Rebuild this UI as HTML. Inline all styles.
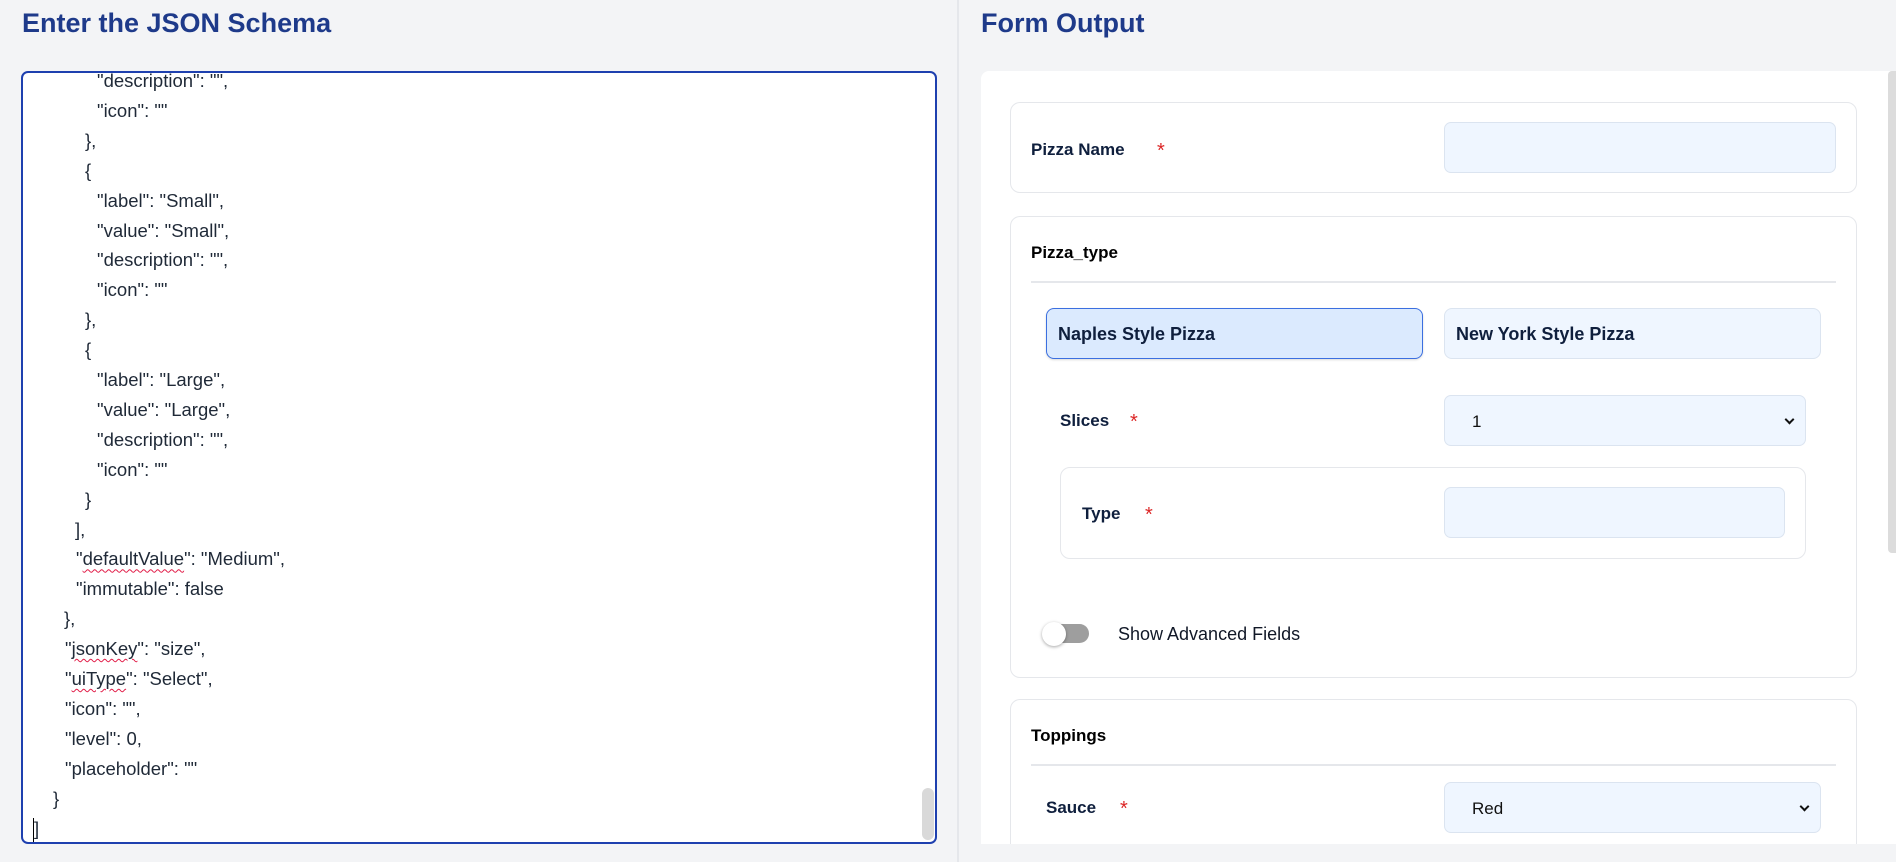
<!DOCTYPE html>
<html><head><meta charset="utf-8"><style>
*{box-sizing:border-box;margin:0;padding:0}
body{width:1896px;height:862px;background:#f3f4f6;font-family:"Liberation Sans",sans-serif;position:relative;overflow:hidden;color:#111827}
.abs{position:absolute}
h1{position:absolute;font-size:27px;font-weight:700;color:#1e3a8a;top:6px;line-height:34px}
.ta{left:21px;top:71px;width:916px;height:773px;border:2px solid #1e40af;border-radius:7px;background:#fff;overflow:hidden}
.ln{position:absolute;font-size:18.5px;line-height:22px;color:#1f2937;white-space:pre}
.sq{text-decoration:underline wavy #e11d48;text-decoration-thickness:1px;text-underline-offset:3px}
.card{position:absolute;border:1px solid #e5e7eb;border-radius:10px;background:#fff}
.lbl{position:absolute;font-size:17px;font-weight:700;color:#0f1f3d;line-height:20px}
.ast{color:#dc2626;font-weight:400;position:absolute}
.inp{position:absolute;background:#eff6ff;border:1px solid #dbe4f0;border-radius:7px}
.h{position:absolute;font-size:17px;font-weight:700;color:#000;line-height:20px}
.hr{position:absolute;height:2px;background:#e5e7eb}
.sel{font-size:17px;color:#111;line-height:20px}
.chev{position:absolute;width:7px;height:7px;border-right:2px solid #111;border-bottom:2px solid #111;transform:rotate(45deg)}
</style></head><body>
<h1 style="left:22px">Enter the JSON Schema</h1>
<div class="abs" style="left:957px;top:0;width:2px;height:862px;background:#e5e7eb"></div>
<div class="abs ta"></div>
<div id="code"></div>
<div class="abs" style="left:922px;top:788px;width:12px;height:52px;background:#d9d9d9;border-radius:6px"></div>
<div class="abs" style="left:33px;top:818px;width:1px;height:24px;background:#000"></div>

<h1 style="left:981px">Form Output</h1>
<div class="abs" style="left:981px;top:71px;width:915px;height:773px;background:#fff;border-radius:8px 0 0 0;overflow:hidden">
<div class="card" style="left:29px;top:628px;width:847px;height:170px"></div>
<div class="h" style="left:50px;top:655px">Toppings</div>
<div class="hr" style="left:50px;top:693px;width:805px"></div>
<div class="lbl" style="left:65px;top:727px">Sauce</div><div class="ast" style="left:139px;top:727px;font-size:20px">*</div>
<div class="inp" style="left:463px;top:711px;width:377px;height:51px"></div>
<div class="sel abs" style="left:491px;top:728px">Red</div><div class="chev" style="left:820px;top:732px"></div>
</div>
<div class="abs" style="left:1888px;top:71px;width:8px;height:482px;background:#dcdcdc;border-radius:4px 0 0 4px"></div>

<div class="card" style="left:1010px;top:102px;width:847px;height:91px"></div>
<div class="lbl" style="left:1031px;top:140px">Pizza Name</div><div class="ast" style="left:1157px;top:140px;font-size:20px">*</div>
<div class="inp" style="left:1444px;top:122px;width:392px;height:51px"></div>

<div class="card" style="left:1010px;top:216px;width:847px;height:462px"></div>
<div class="h" style="left:1031px;top:243px">Pizza_type</div>
<div class="hr" style="left:1031px;top:281px;width:805px"></div>
<div class="abs" style="left:1046px;top:308px;width:377px;height:51px;background:#dbeafe;border:1px solid #3b6fe0;border-radius:8px;box-shadow:0 1px 2px rgba(0,0,0,.15)"></div>
<div class="lbl" style="left:1058px;top:324px;font-size:18px">Naples Style Pizza</div>
<div class="abs" style="left:1444px;top:308px;width:377px;height:51px;background:#eff6ff;border:1px solid #dbe4f0;border-radius:8px"></div>
<div class="lbl" style="left:1456px;top:324px;font-size:18px">New York Style Pizza</div>
<div class="lbl" style="left:1060px;top:411px">Slices</div><div class="ast" style="left:1130px;top:411px;font-size:20px">*</div>
<div class="inp" style="left:1444px;top:395px;width:362px;height:51px"></div>
<div class="sel abs" style="left:1472px;top:412px">1</div><div class="chev" style="left:1786px;top:416px"></div>
<div class="card" style="left:1060px;top:467px;width:746px;height:92px"></div>
<div class="lbl" style="left:1082px;top:504px">Type</div><div class="ast" style="left:1145px;top:504px;font-size:20px">*</div>
<div class="inp" style="left:1444px;top:487px;width:341px;height:51px"></div>
<div class="abs" style="left:1050px;top:624px;width:39px;height:19px;background:#9e9e9e;border-radius:10px"></div>
<div class="abs" style="left:1042px;top:622px;width:24px;height:24px;background:#fff;border-radius:50%;box-shadow:0 1px 3px rgba(0,0,0,.35)"></div>
<div class="abs" style="left:1118px;top:624px;font-size:18px;color:#111827;line-height:20px">Show Advanced Fields</div>

<script>
var L=[[97,'"description": "",'],[97,'"icon": ""'],[85,'},'],[85,'{'],[97,'"label": "Small",'],[97,'"value": "Small",'],[97,'"description": "",'],[97,'"icon": ""'],[85,'},'],[85,'{'],[97,'"label": "Large",'],[97,'"value": "Large",'],[97,'"description": "",'],[97,'"icon": ""'],[85,'}'],[75,'],'],[76,'"<span class=sq>defaultValue</span>": "Medium",'],[76,'"immutable": false'],[64,'},'],[65,'"<span class=sq>jsonKey</span>": "size",'],[65,'"<span class=sq>uiType</span>": "Select",'],[65,'"icon": "",'],[65,'"level": 0,'],[65,'"placeholder": ""'],[53,'}'],[34,']']];
var h='';L.forEach(function(l,i){h+='<div class="ln" style="left:'+l[0]+'px;top:'+(70+i*29.9)+'px">'+l[1]+'</div>'});
document.getElementById('code').innerHTML=h;
</script>
</body></html>
